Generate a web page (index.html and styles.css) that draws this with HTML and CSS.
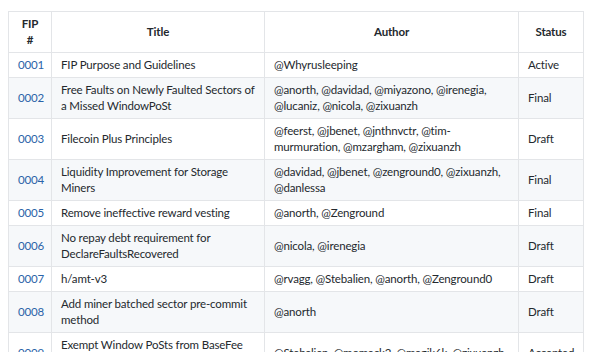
FILE: index.html
```html
<!DOCTYPE html>
<html lang="en">
<head>
  <meta charset="UTF-8">
  <meta name="viewport" content="width=device-width, initial-scale=1.0">
  <title>FIPs</title>
  <link rel="stylesheet" href="styles.css">
</head>
<body>
  <table class="fip-table">
    <colgroup>
      <col class="col-num">
      <col class="col-title">
      <col class="col-author">
      <col class="col-status">
    </colgroup>
    <thead>
      <tr>
        <th>FIP #</th>
        <th>Title</th>
        <th>Author</th>
        <th>Status</th>
      </tr>
    </thead>
    <tbody>
      <tr>
        <td><a href="#">0001</a></td>
        <td>FIP Purpose and Guidelines</td>
        <td>@Whyrusleeping</td>
        <td>Active</td>
      </tr>
      <tr>
        <td><a href="#">0002</a></td>
        <td>Free Faults on Newly Faulted Sectors of a Missed WindowPoSt</td>
        <td>@anorth, @davidad, @miyazono, @irenegia, @lucaniz, @nicola, @zixuanzh</td>
        <td>Final</td>
      </tr>
      <tr>
        <td><a href="#">0003</a></td>
        <td>Filecoin Plus Principles</td>
        <td>@feerst, @jbenet, @jnthnvctr, @tim-murmuration, @mzargham, @zixuanzh</td>
        <td>Draft</td>
      </tr>
      <tr>
        <td><a href="#">0004</a></td>
        <td>Liquidity Improvement for Storage Miners</td>
        <td>@davidad, @jbenet, @zenground0, @zixuanzh, @danlessa</td>
        <td>Final</td>
      </tr>
      <tr>
        <td><a href="#">0005</a></td>
        <td>Remove ineffective reward vesting</td>
        <td>@anorth, @Zenground</td>
        <td>Final</td>
      </tr>
      <tr>
        <td><a href="#">0006</a></td>
        <td>No repay debt requirement for DeclareFaultsRecovered</td>
        <td>@nicola, @irenegia</td>
        <td>Draft</td>
      </tr>
      <tr>
        <td><a href="#">0007</a></td>
        <td>h/amt-v3</td>
        <td>@rvagg, @Stebalien, @anorth, @Zenground0</td>
        <td>Draft</td>
      </tr>
      <tr>
        <td><a href="#">0008</a></td>
        <td>Add miner batched sector pre-commit method</td>
        <td>@anorth</td>
        <td>Draft</td>
      </tr>
      <tr>
        <td><a href="#">0009</a></td>
        <td>Exempt Window PoSts from BaseFee burn</td>
        <td>@Stebalien, @momack2, @magik6k, @zixuanzh</td>
        <td>Accepted</td>
      </tr>
    </tbody>
  </table>
</body>
</html>
```

FILE: styles.css
```css
body {
  margin: 11px 0 0 8px;
  background-color: #fff;
  color: #24292e;
  font-family: Lato, Arial, sans-serif;
  font-size: 11.5px;
  letter-spacing: -0.15px;
}
.fip-table {
  border-collapse: collapse;
  table-layout: fixed;
  width: 575px;
}
.col-num { width: 43px; }
.col-title { width: 213px; }
.col-author { width: 254px; }
.col-status { width: 65px; }
.fip-table th,
.fip-table td {
  border: 1px solid #e3e5e8;
  padding: 4px 9px;
  line-height: 16px;
  text-align: left;
  vertical-align: middle;
}
.fip-table th {
  text-align: center;
  font-weight: 700;
}
.fip-table tbody tr:nth-child(even) {
  background-color: #f6f8fa;
}
.fip-table a {
  color: #2a63a8;
  text-decoration: none;
}
```
